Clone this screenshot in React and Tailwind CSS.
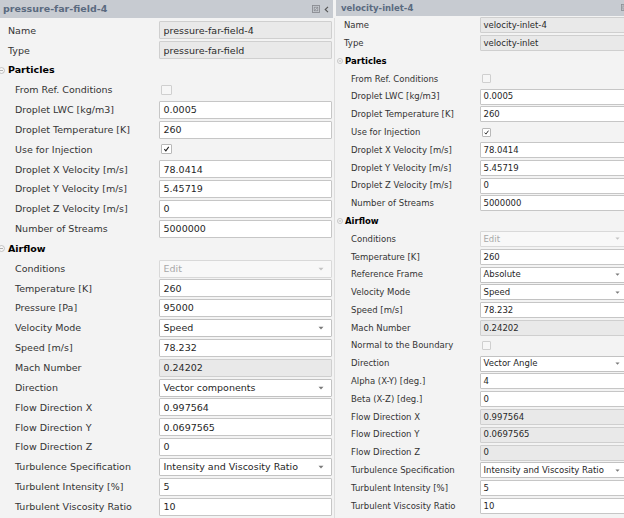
import React from "react";

const LEFT = {
  title: "pressure-far-field-4",
  titleBar: "h-[18px] pl-[3px] text-[9.5px]",
  bodyPad: "pt-[2.5px]",
  row: "h-[19.85px]",
  text: "text-[9.5px]",
  labelW: "w-[159px]",
  top: "pl-[8px]",
  sub: "pl-[15px]",
  box: "h-[18px] w-[173px] pl-[3.5px] pr-[7px]",
  cb: "w-[11px] h-[10px] ml-[2px]",
  icon: 7,
  iconCls: "ml-[-2.5px] mr-[3.5px]",
  arrowW: 6,
};

const RIGHT = {
  title: "velocity-inlet-4",
  titleBar: "h-[15.5px] pl-[5px] text-[8.5px]",
  bodyPad: "pt-[1px]",
  row: "h-[17.8px]",
  text: "text-[8.5px]",
  labelW: "w-[144px]",
  top: "pl-[8px]",
  sub: "pl-[15px]",
  box: "h-[16px] w-[152px] pl-[2.5px] pr-[11px]",
  cb: "w-[9px] h-[9px] ml-[2px]",
  icon: 6,
  iconCls: "ml-[1px] mr-[2px]",
  arrowW: 5,
};

const leftRows = [
  { t: "top", label: "Name", k: "ro", v: "pressure-far-field-4" },
  { t: "top", label: "Type", k: "ro", v: "pressure-far-field" },
  { t: "sec", label: "Particles" },
  { label: "From Ref. Conditions", k: "cb" },
  { label: "Droplet LWC [kg/m3]", k: "in", v: "0.0005" },
  { label: "Droplet Temperature [K]", k: "in", v: "260" },
  { label: "Use for Injection", k: "cbc" },
  { label: "Droplet X Velocity [m/s]", k: "in", v: "78.0414" },
  { label: "Droplet Y Velocity [m/s]", k: "in", v: "5.45719" },
  { label: "Droplet Z Velocity [m/s]", k: "in", v: "0" },
  { label: "Number of Streams", k: "in", v: "5000000" },
  { t: "sec", label: "Airflow" },
  { label: "Conditions", k: "dsel", v: "Edit" },
  { label: "Temperature [K]", k: "in", v: "260" },
  { label: "Pressure [Pa]", k: "in", v: "95000" },
  { label: "Velocity Mode", k: "sel", v: "Speed" },
  { label: "Speed [m/s]", k: "in", v: "78.232" },
  { label: "Mach Number", k: "ro", v: "0.24202" },
  { label: "Direction", k: "sel", v: "Vector components" },
  { label: "Flow Direction X", k: "in", v: "0.997564" },
  { label: "Flow Direction Y", k: "in", v: "0.0697565" },
  { label: "Flow Direction Z", k: "in", v: "0" },
  { label: "Turbulence Specification", k: "sel", v: "Intensity and Viscosity Ratio" },
  { label: "Turbulent Intensity [%]", k: "in", v: "5" },
  { label: "Turbulent Viscosity Ratio", k: "in", v: "10" },
];

const rightRows = [
  { t: "top", label: "Name", k: "ro", v: "velocity-inlet-4" },
  { t: "top", label: "Type", k: "ro", v: "velocity-inlet" },
  { t: "sec", label: "Particles" },
  { label: "From Ref. Conditions", k: "cb" },
  { label: "Droplet LWC [kg/m3]", k: "in", v: "0.0005" },
  { label: "Droplet Temperature [K]", k: "in", v: "260" },
  { label: "Use for Injection", k: "cbc" },
  { label: "Droplet X Velocity [m/s]", k: "in", v: "78.0414" },
  { label: "Droplet Y Velocity [m/s]", k: "in", v: "5.45719" },
  { label: "Droplet Z Velocity [m/s]", k: "in", v: "0" },
  { label: "Number of Streams", k: "in", v: "5000000" },
  { t: "sec", label: "Airflow" },
  { label: "Conditions", k: "dsel", v: "Edit" },
  { label: "Temperature [K]", k: "in", v: "260" },
  { label: "Reference Frame", k: "sel", v: "Absolute" },
  { label: "Velocity Mode", k: "sel", v: "Speed" },
  { label: "Speed [m/s]", k: "in", v: "78.232" },
  { label: "Mach Number", k: "ro", v: "0.24202" },
  { label: "Normal to the Boundary", k: "cb" },
  { label: "Direction", k: "sel", v: "Vector Angle" },
  { label: "Alpha (X-Y) [deg.]", k: "in", v: "4" },
  { label: "Beta (X-Z) [deg.]", k: "in", v: "0" },
  { label: "Flow Direction X", k: "ro", v: "0.997564" },
  { label: "Flow Direction Y", k: "ro", v: "0.0697565" },
  { label: "Flow Direction Z", k: "ro", v: "0" },
  { label: "Turbulence Specification", k: "sel", v: "Intensity and Viscosity Ratio" },
  { label: "Turbulent Intensity [%]", k: "in", v: "5" },
  { label: "Turbulent Viscosity Ratio", k: "in", v: "10" },
];

function Arrow({ w, light }) {
  return (
    <svg width={w} height={Math.round(w * 0.6)} viewBox="0 0 6 3.6" className="shrink-0">
      <path d="M0.5 0.5 L5.5 0.5 L3 3.2 Z" fill={light ? "#c4c4c4" : "#7a7a7a"} />
    </svg>
  );
}

function SecIcon({ size, cls }) {
  return (
    <svg width={size} height={size} viewBox="0 0 8 8" className={"shrink-0 " + cls}>
      <circle cx="4" cy="4" r="3.4" fill="#f7f7f7" stroke="#b5b5b5" strokeWidth="0.9" />
      <path d="M2.3 4 H5.7" stroke="#9a9a9a" strokeWidth="0.9" />
    </svg>
  );
}

function Value({ r, s }) {
  if (r.k === "cb" || r.k === "cbc") {
    return (
      <div
        className={
          s.cb +
          " border rounded-[1px] flex items-center justify-center " +
          (r.k === "cbc" ? "bg-white border-[#b8b8b8]" : "bg-[#f6f6f6] border-[#cfcfcf]")
        }
      >
        {r.k === "cbc" && (
          <svg viewBox="0 0 10 10" className="w-full h-full">
            <path d="M2.3 5.2 L4.2 7.3 L7.8 2.4" fill="none" stroke="#1e1e1e" strokeWidth="1.3" />
          </svg>
        )}
      </div>
    );
  }
  const base = s.box + " shrink-0 border rounded-[1px] flex items-center justify-between whitespace-nowrap overflow-hidden ";
  if (r.k === "ro") {
    return <div className={base + "bg-[#e9e9e9] border-[#cfcfcf] text-[#2a2a2a]"}>{r.v}</div>;
  }
  if (r.k === "sel") {
    return (
      <div className={base + "bg-white border-[#c2c2c2] text-[#1f1f1f]"}>
        <span>{r.v}</span>
        <Arrow w={s.arrowW} />
      </div>
    );
  }
  if (r.k === "dsel") {
    return (
      <div className={base + "bg-[#f8f8f8] border-[#d9d9d9] text-[#a8a8a8]"}>
        <span>{r.v}</span>
        <Arrow w={s.arrowW} light />
      </div>
    );
  }
  return <div className={base + "bg-white border-[#c6c6c6] text-[#1f1f1f]"}>{r.v}</div>;
}

function Row({ r, s }) {
  if (r.t === "sec") {
    return (
      <div className={s.row + " flex items-center font-bold text-black"}>
        <SecIcon size={s.icon} cls={s.iconCls} />
        <span>{r.label}</span>
      </div>
    );
  }
  return (
    <div className={s.row + " flex items-center"}>
      <div className={s.labelW + " shrink-0 whitespace-nowrap text-[#333333] " + (r.t === "top" ? s.top : s.sub)}>
        {r.label}
      </div>
      <Value r={r} s={s} />
    </div>
  );
}

function Panel({ s, rows, width, icons }) {
  return (
    <div className={"flex flex-col shrink-0 overflow-hidden " + width + " " + s.text}>
      <div className={s.titleBar + " bg-[#c7cbd1] flex items-center justify-between shrink-0"}>
        <span className="font-bold text-[#5a6a7f] whitespace-nowrap">{s.title}</span>
        {icons}
      </div>
      <div className={"flex flex-col " + s.bodyPad}>
        {rows.map((r, i) => (
          <Row key={i} r={r} s={s} />
        ))}
      </div>
    </div>
  );
}

export default function App() {
  return (
    <div className="w-[624px] h-[518px] overflow-hidden flex bg-[#f3f3f3] font-['DejaVu_Sans',sans-serif] leading-none">
      <Panel
        s={LEFT}
        rows={leftRows}
        width="w-[333px]"
        icons={
          <div className="flex items-center gap-[4px] pr-[4px]">
            <svg width="8" height="8" viewBox="0 0 8 8">
              <rect x="0.5" y="0.5" width="7" height="7" fill="none" stroke="#8a8d92" strokeWidth="0.9" />
              <rect x="2.2" y="2.2" width="3.6" height="3.6" fill="none" stroke="#8a8d92" strokeWidth="0.8" />
              <path d="M2.2 5.8 L5.8 2.2" stroke="#8a8d92" strokeWidth="0.7" />
            </svg>
            <svg width="5" height="7" viewBox="0 0 5 7">
              <path d="M4 0.8 L1.2 3.5 L4 6.2" fill="none" stroke="#555" strokeWidth="1.1" />
            </svg>
          </div>
        }
      />
      <div className="w-[3px] shrink-0 flex justify-center pt-[18px]">
        <div className="w-[1px] h-full bg-[#dddddd]" />
      </div>
      <Panel
        s={RIGHT}
        rows={rightRows}
        width="w-[292px]"
        icons={
          <div className="flex items-center pr-[0px]">
            <svg width="7" height="7" viewBox="0 0 8 8">
              <rect x="0.5" y="0.5" width="7" height="7" fill="none" stroke="#8a8d92" strokeWidth="0.9" />
              <rect x="2.2" y="2.2" width="3.6" height="3.6" fill="none" stroke="#8a8d92" strokeWidth="0.8" />
            </svg>
          </div>
        }
      />
    </div>
  );
}
